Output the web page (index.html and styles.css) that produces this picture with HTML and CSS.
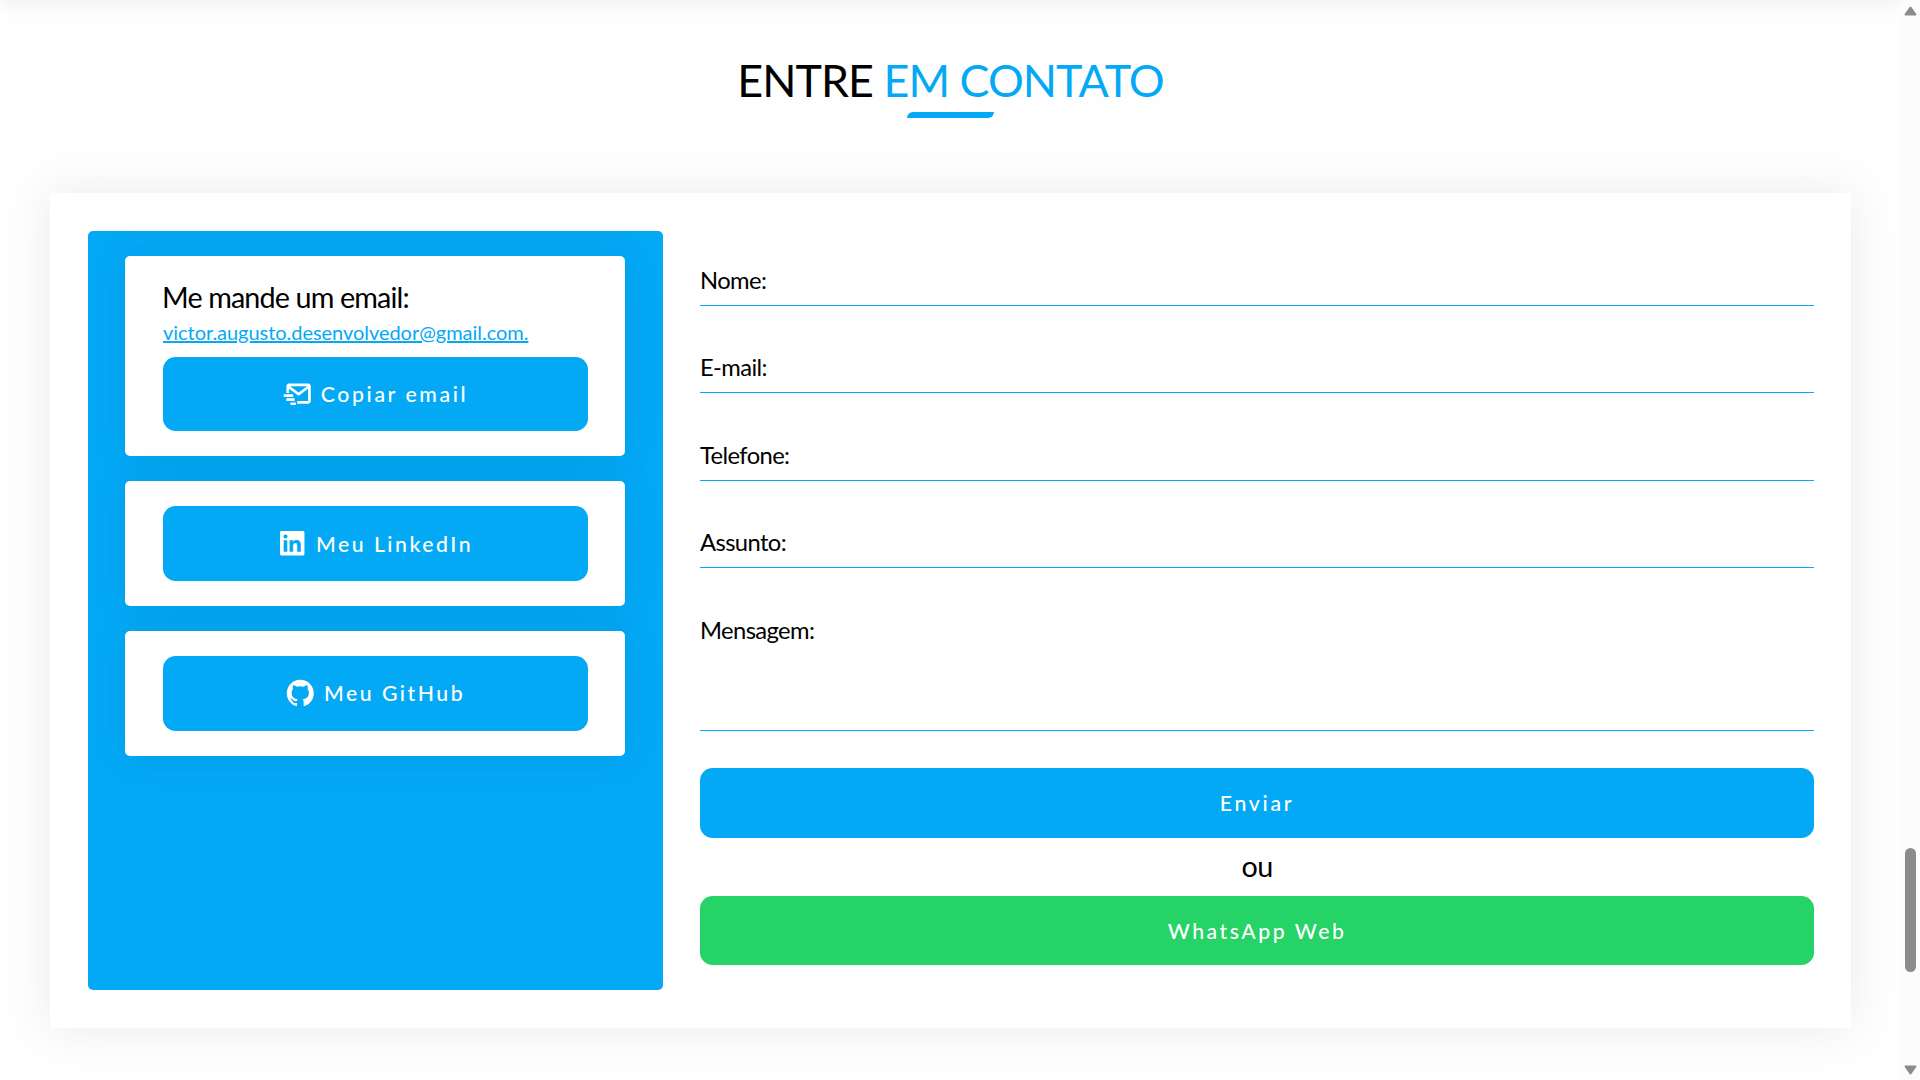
FILE: index.html
```html
<!DOCTYPE html>
<html lang="pt-BR">
<head>
<meta charset="utf-8">
<title>Entre em contato</title>
<link rel="stylesheet" href="styles.css">
</head>
<body>
<div class="page">
  <section class="contact">
    <div class="section-edge"></div>
    <h2 class="title">ENTRE <span>EM CONTATO</span></h2>
    <div class="title-bar"></div>
    <div class="panel">
      <aside class="links">
        <div class="card">
          <p class="card-title">Me mande um email:</p>
          <a class="mail">victor.augusto.desenvolvedor@gmail.com.</a>
          <div class="btn copy"><svg class="icon" viewBox="0 0 24 24"><path d="M20 4H6c-1.103 0-2 .897-2 2v5h2V8l6.4 4.8a1.001 1.001 0 0 0 1.2 0L20 8v9h-8v2h8c1.103 0 2-.897 2-2V6c0-1.103-.897-2-2-2zm-7 6.75L6.666 6h12.668L13 10.75z"/><path d="M2 12h7v2H2zm2 3h6v2H4zm3 3h4v2H7z"/></svg><span>Copiar email</span></div>
        </div>
        <div class="card">
          <div class="btn linkedin"><svg class="icon" viewBox="0 0 24 24"><path d="M20 3H4a1 1 0 0 0-1 1v16a1 1 0 0 0 1 1h16a1 1 0 0 0 1-1V4a1 1 0 0 0-1-1zM8.339 18.337H5.667v-8.59h2.672v8.59zM7.003 8.574a1.548 1.548 0 1 1 0-3.096 1.548 1.548 0 0 1 0 3.096zm11.335 9.763h-2.669V14.16c0-.996-.018-2.277-1.388-2.277-1.39 0-1.601 1.086-1.601 2.207v4.248h-2.667v-8.59h2.56v1.174h.037c.355-.675 1.227-1.387 2.524-1.387 2.704 0 3.203 1.778 3.203 4.092v4.71z"/></svg><span>Meu LinkedIn</span></div>
        </div>
        <div class="card">
          <div class="btn github"><svg class="icon" viewBox="0 0 24 24"><path d="M12.026 2c-5.509 0-9.974 4.465-9.974 9.974 0 4.406 2.857 8.145 6.821 9.465.499.09.679-.217.679-.481 0-.237-.008-.865-.011-1.696-2.775.602-3.361-1.338-3.361-1.338-.452-1.152-1.107-1.459-1.107-1.459-.905-.619.069-.605.069-.605 1.002.07 1.527 1.028 1.527 1.028.89 1.524 2.336 1.084 2.902.829.091-.645.351-1.085.635-1.334-2.214-.251-4.542-1.107-4.542-4.93 0-1.087.389-1.979 1.024-2.675-.101-.253-.446-1.268.099-2.64 0 0 .837-.269 2.742 1.021a9.582 9.582 0 0 1 2.496-.336 9.554 9.554 0 0 1 2.496.336c1.906-1.291 2.742-1.021 2.742-1.021.545 1.372.203 2.387.099 2.64.64.696 1.024 1.587 1.024 2.675 0 3.833-2.33 4.675-4.552 4.922.355.308.675.916.675 1.846 0 1.334-.012 2.41-.012 2.737 0 .267.178.577.687.479C19.146 20.115 22 16.379 22 11.974 22 6.465 17.535 2 12.026 2z"/></svg><span>Meu GitHub</span></div>
        </div>
      </aside>
      <form class="form">
        <div class="field"><label>Nome:</label></div>
        <div class="field"><label>E-mail:</label></div>
        <div class="field"><label>Telefone:</label></div>
        <div class="field"><label>Assunto:</label></div>
        <div class="field message"><label>Mensagem:</label></div>
        <div class="btn send"><span>Enviar</span></div>
        <p class="or">ou</p>
        <div class="btn whatsapp"><span>WhatsApp Web</span></div>
      </form>
    </div>
  </section>
  <div class="scrollbar">
    <svg class="arrow" viewBox="0 0 13 10"><path d="M6.5 1.5L11.5 8.5H1.5Z"/></svg>
    <div class="thumb"></div>
    <svg class="arrow" viewBox="0 0 13 10"><path d="M1.5 1.5H11.5L6.5 8.5Z"/></svg>
  </div>
</div>
</body>
</html>
```
FILE: styles.css
```css
* {
  box-sizing: border-box;
  margin: 0;
  padding: 0;
}

body {
  font-family: Lato, sans-serif;
  color: #000;
  background: #fff;
  overflow: hidden;
}

.page {
  display: flex;
  height: 1080px;
}

.contact {
  flex: 1;
  background: #fefefe;
  overflow: hidden;
}

/* lower edge of the section above, casting its shadow */
.section-edge {
  height: 60px;
  margin-top: -60px;
  box-shadow: 0 0 22px rgba(0, 0, 0, 0.09);
}

.title {
  margin-top: 53px;
  font-size: 44.8px;
  line-height: 54px;
  font-weight: 400;
  letter-spacing: -0.95px;
  text-align: center;
}

.title span {
  color: #04a9f6;
}

.title-bar {
  width: 87px;
  height: 6px;
  margin: 5px auto 75px;
  border-radius: 6px 0;
  background: #04a9f6;
}

.panel {
  display: flex;
  gap: 37px;
  width: 1801px;
  height: 835px;
  margin: 0 auto;
  padding: 38px 37px 38px 38px;
  background: #fff;
  box-shadow: 0 0 44px rgba(0, 0, 0, 0.08);
}

.links {
  display: flex;
  flex-direction: column;
  gap: 25px;
  width: 575px;
  padding: 25px 38px 0 37px;
  border-radius: 5px;
  background: #04a9f6;
}

.card {
  padding: 25px 37px 25px 38px;
  border-radius: 5px;
  background: #fff;
  box-shadow: 0 0 44px rgba(0, 0, 0, 0.08);
}

.card-title {
  margin-left: -1px;
  font-size: 28.75px;
  line-height: 32px;
  letter-spacing: -0.87px;
}

.mail {
  display: block;
  height: 24px;
  margin: 7px 0 13px;
  font-size: 20px;
  line-height: 24px;
  letter-spacing: -0.04px;
  color: #04a9f6;
  text-decoration: underline;
}

.btn {
  display: flex;
  align-items: center;
  justify-content: center;
  gap: 7.5px;
  height: 75px;
  border-radius: 12.5px;
  background: #04a9f6;
  color: #fff;
  font-size: 21.25px;
  font-weight: 500;
  line-height: 26px;
  letter-spacing: 2.5px;
  white-space: nowrap;
}

.links .btn {
  padding-right: 2px;
}

.copy {
  height: 74px;
  letter-spacing: 2.6px;
}

.github span {
  padding-bottom: 1px;
}

.icon {
  width: 32.5px;
  height: 32.5px;
  fill: currentColor;
}

.form {
  flex: 1;
  padding-top: 34px;
}

.field {
  height: 41px;
  margin-bottom: 46.4px;
  border-bottom: 1px solid #04a9f6;
}

.field label {
  display: block;
  font-size: 23.75px;
  line-height: 30px;
  letter-spacing: -0.6px;
}

.message {
  height: 116px;
  margin-bottom: 37.4px;
}

.send {
  height: 70px;
  letter-spacing: 2.7px;
}

.or {
  height: 58px;
  font-size: 28.75px;
  line-height: 56px;
  letter-spacing: -0.75px;
  text-align: center;
}

.whatsapp {
  height: 69px;
  padding-top: 1px;
  background: #25d366;
}

.scrollbar {
  display: flex;
  flex-direction: column;
  align-items: center;
  width: 19px;
  padding: 6px 0 5px;
  background: #fcfcfc;
}

.arrow {
  width: 13px;
  height: 10px;
  fill: #8b8b8b;
  stroke: #8b8b8b;
  stroke-width: 2;
  stroke-linejoin: round;
}

.thumb {
  width: 11px;
  height: 124px;
  margin: 832px 0 93px;
  border-radius: 6px;
  background: #8b8b8b;
}
```
